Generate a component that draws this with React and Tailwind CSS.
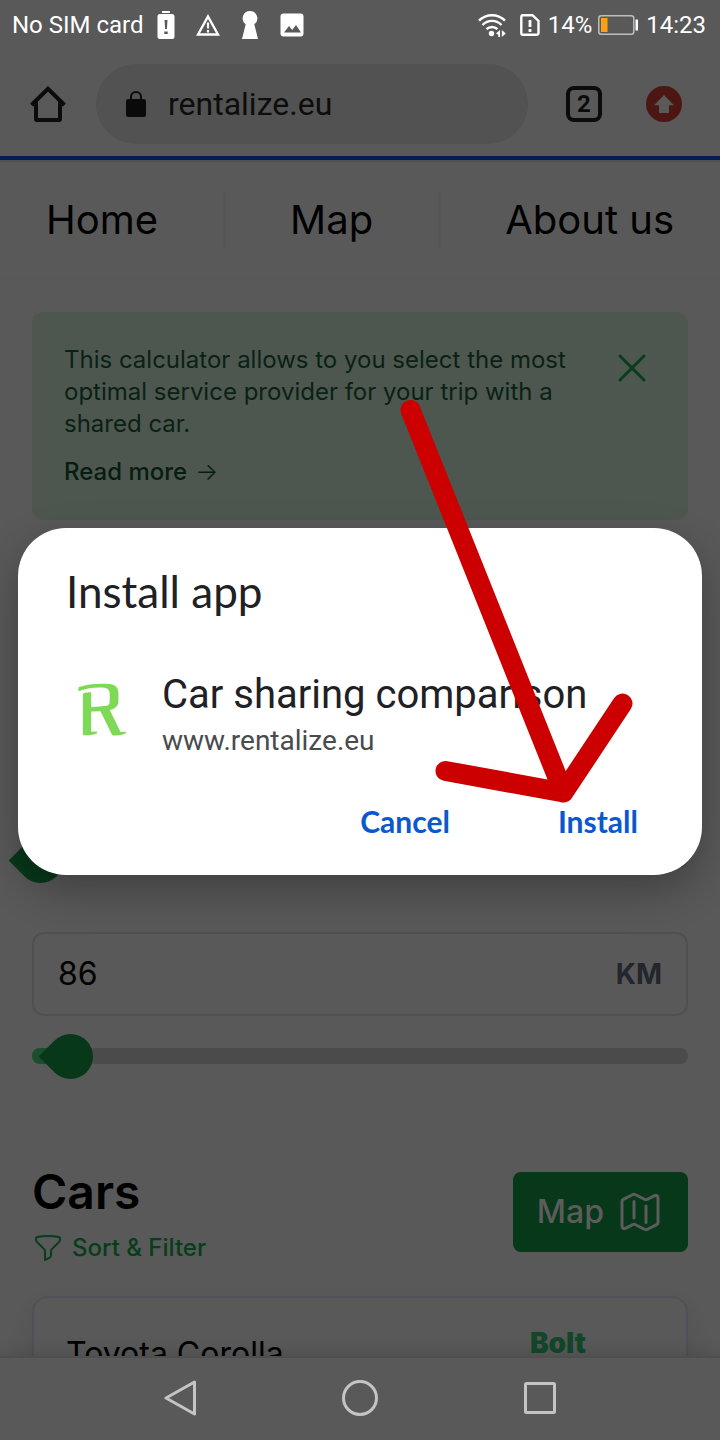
import { useState } from "react";
import { HiOutlineFunnel, HiOutlineMap, HiOutlineXMark } from "react-icons/hi2";

function StatusBar() {
  return (
    <div className="flex h-12 shrink-0 items-center justify-between pt-0.5 pr-3.5 pl-3 text-[24px] leading-8 text-white">
      <div className="flex items-center">
        <span>No SIM card</span>
        <svg className="ml-3 h-7 w-5" viewBox="0 0 20 28" aria-hidden="true">
          <path fill="#fff" fillRule="evenodd" d="M6 0h8v2H6zM4 3h12a2.5 2.5 0 0 1 2.500 2.500v20A2.500 2.500 0 0 1 16 28H4a2.500 2.500 0 0 1-2.500-2.500v-20A2.500 2.500 0 0 1 4 3zm4.500 6 .6 9h1.800l.6-9zM8.300 20.500v2.600h3.400v-2.600z" />
        </svg>
        <svg className="ml-5 h-6 w-6" viewBox="0 0 24 24" aria-hidden="true">
          <path d="M12 3.500 22 21.500H2z" fill="none" stroke="#fff" strokeWidth="2.400" />
          <path d="M12 9.500v6M12 17v2.600" stroke="#fff" strokeWidth="2.200" />
        </svg>
        <svg className="ml-5 h-7 w-5" viewBox="0 0 20 28" aria-hidden="true">
          <path fill="#fff" d="M10 0a7.300 7.300 0 0 1 4.300 13.200L18 28H2l3.700-14.800A7.300 7.300 0 0 1 10 0z" />
        </svg>
        <svg className="ml-5 h-6 w-6" viewBox="0 0 24 24" aria-hidden="true">
          <rect x=".5" y=".5" width="23" height="23" rx="3" fill="#fff" />
          <path fill="#595959" d="m4 19.500 5-6.500 3.200 4 3.800-5 5 7.500z" />
        </svg>
      </div>
      <div className="flex items-center">
        <svg className="h-6 w-7" viewBox="0 0 28 24" aria-hidden="true">
          <g fill="none" stroke="#fff" strokeWidth="2.400">
            <path d="M1 7.500C8.500.5 19.500.5 27 7.500" />
            <path d="M4.500 12C10 6.500 18 6.500 23.500 12" />
            <path d="M8.500 16.200c3-3 8-3 11 0" />
          </g>
          <circle cx="13.500" cy="20.500" r="2.700" fill="#fff" />
          <path fill="#fff" d="M22 17v7h-1.700v-2.200L18 20.500zM23.800 17l4 3.500-4 3.500z" />
        </svg>
        <svg className="ml-3.5 h-6 w-5" viewBox="0 0 20 24" aria-hidden="true">
          <path d="M3 2.200h9.500L18.500 8v12a1.800 1.800 0 0 1-1.800 1.800H3A1.800 1.800 0 0 1 1.300 20V4A1.800 1.800 0 0 1 3 2.200z" fill="none" stroke="#fff" strokeWidth="2.400" />
          <path d="M10 7v7M10 16v3" stroke="#fff" strokeWidth="2.800" />
        </svg>
        <span className="ml-2">14%</span>
        <svg className="ml-1.5 h-5 w-10" viewBox="0 0 40 20" aria-hidden="true">
          <rect x=".8" y=".8" width="35" height="18.400" rx="2.500" fill="none" stroke="#bdbdbd" strokeWidth="1.500" />
          <rect x="3" y="3" width="6.500" height="14" fill="#ff9f1a" />
          <rect x="37.500" y="4.500" width="2.500" height="11" fill="#fff" />
        </svg>
        <span className="ml-2">14:23</span>
      </div>
    </div>
  );
}

function Toolbar() {
  return (
    <header className="h-[114px] shrink-0 border-b-2 border-[#505050]">
      <div className="flex h-[112px] items-center border-b-4 border-[#001f4f] pt-1 pr-4">
        <button type="button" aria-label="Home" className="flex h-12 w-24 items-center justify-center">
          <svg className="h-9 w-9" viewBox="0 0 36 36" fill="none" stroke="#0b0b0b" strokeWidth="4" aria-hidden="true">
            <path d="M1.500 19 18 2.800 34.500 19" />
            <path d="M6 16v17a1 1 0 0 0 1 1h22a1 1 0 0 0 1-1V16" />
          </svg>
        </button>
        <div className="flex h-20 min-w-0 flex-1 items-center rounded-full bg-[#525252] pl-7">
          <svg className="h-7 w-6 shrink-0" viewBox="0 0 24 28" aria-hidden="true">
            <rect x="2" y="9" width="20" height="18" rx="2.500" fill="#0a0a0a" />
            <path d="M7 10V7a5 5 0 0 1 10 0v3" fill="none" stroke="#0a0a0a" strokeWidth="2" />
          </svg>
          <input
            aria-label="Address"
            defaultValue="rentalize.eu"
            className="ml-5 w-full min-w-0 bg-transparent text-[32px] leading-10 text-[#0d0d0d] outline-none"
          />
        </div>
        <button type="button" className="ml-4 flex h-12 w-20 items-center justify-center">
          <span className="flex h-9 w-9 items-center justify-center rounded-lg border-4 border-[#0b0b0b] text-[24px] leading-6 font-bold text-[#0b0b0b]">
            2
          </span>
        </button>
        <button type="button" aria-label="Update" className="flex h-12 w-20 items-center justify-center">
          <svg className="h-9 w-9" viewBox="0 0 36 36" aria-hidden="true">
            <circle cx="18" cy="18" r="18" fill="#4c1713" />
            <path d="m18 9 10 10.200h-5V27H13v-7.800H8z" fill="#595959" />
          </svg>
        </button>
      </div>
    </header>
  );
}

function SiteNav() {
  return (
    <nav className="flex h-[118px] items-center justify-between border-b-2 border-[#575757] px-[46px] text-[40px] leading-[56px] text-black">
      <a href="#home">Home</a>
      <span className="h-14 w-[3px] bg-[#565656]" />
      <a href="#map">Map</a>
      <span className="h-14 w-[3px] bg-[#565656]" />
      <a href="#about">About us</a>
    </nav>
  );
}

function Banner() {
  return (
    <section className="mt-8 flex items-start justify-between rounded-xl bg-[#4d574f] p-8 text-[24px] leading-8 text-[#0a2115]">
      <div className="max-w-[520px]">
        <p>
          This calculator allows to you select the most optimal service provider for your trip with a shared car.
        </p>
        <a href="#more" className="mt-4 flex gap-2 font-medium text-[#061d10]">
          <span>Read more</span>
          <span className="font-light" aria-hidden="true">→</span>
        </a>
      </div>
      <button type="button" aria-label="Close" className="shrink-0 text-[#0a3d1c]">
        <HiOutlineXMark className="h-12 w-12" />
      </button>
    </section>
  );
}

function Slider({ label, value, max, onChange }) {
  return (
    <div className="grid h-4 items-center">
      <div className="h-4 overflow-hidden rounded-full bg-[#4a4c4a] [grid-area:1/1]">
        <div className="h-4 bg-[#1a4f2c]" style={{ width: `${(value / max) * 100}%` }} />
      </div>
      <input
        type="range"
        aria-label={label}
        min="0"
        max={max}
        value={value}
        onChange={(e) => onChange(Number(e.target.value))}
        className="-mx-[14px] h-4 appearance-none bg-transparent [grid-area:1/1] [&::-webkit-slider-thumb]:h-[45px] [&::-webkit-slider-thumb]:w-[45px] [&::-webkit-slider-thumb]:rotate-45 [&::-webkit-slider-thumb]:appearance-none [&::-webkit-slider-thumb]:rounded-full [&::-webkit-slider-thumb]:rounded-bl-[6px] [&::-webkit-slider-thumb]:bg-[#08381a]"
      />
    </div>
  );
}

function Cars() {
  return (
    <section className="mt-24">
      <div className="flex items-center justify-between">
        <div>
          <h2 className="text-[48px] leading-[64px] font-semibold text-black">Cars</h2>
          <button type="button" className="mt-2 flex items-center gap-2 text-[24px] leading-8 font-medium text-[#083d1b]">
            <HiOutlineFunnel className="h-8 w-8" />
            Sort &amp; Filter
          </button>
        </div>
        <button type="button" className="flex h-20 items-center gap-3 rounded-lg bg-[#08381a] px-6 text-[32px] leading-10 font-medium text-[#5c5c5c]">
          Map
          <HiOutlineMap className="h-12 w-12" />
        </button>
      </div>
      <article className="mt-8 flex h-60 items-start justify-between rounded-2xl border-2 border-[#505056] pt-[22px] pr-[100px] pl-8 shadow-[0_12px_24px_rgba(0,0,0,0.08)]">
        <h3 className="pt-3.5 text-[32px] leading-10 text-black">Toyota Corolla</h3>
        <span className="text-[28px] leading-[46px] font-black text-[#12472a]">Bolt</span>
      </article>
    </section>
  );
}

function InstallDialog() {
  return (
    <div className="pointer-events-none absolute inset-x-0 top-12 bottom-[86px] flex items-center">
      <div
        role="dialog"
        aria-labelledby="install-title"
        className="pointer-events-auto relative mx-[18px] w-full rounded-[48px] bg-white px-12 pt-[37px] pb-[30px] text-[#202124] shadow-[0_16px_40px_rgba(0,0,0,0.28)]"
      >
        <h1 id="install-title" className="font-['Lato',sans-serif] text-[44px] leading-[52px]">
          Install app
        </h1>
        <div className="mt-[52px] flex items-start gap-6">
          <svg className="mt-1.5 h-[72px] w-[72px] shrink-0" viewBox="0 0 72 72" aria-hidden="true">
            <g fill="#7ed957">
              <path fillRule="evenodd" d="M12.500 12.200C20 9.500 31 8.400 43 9c6 .4 9.400 3.500 9.400 8.500v8.500c0 5-3.500 8-8.600 9L54.500 57l5-.2c.8 0 .7 1.400-.2 1.800-2.800 1.600-8 2.300-13 1.700L34.500 36.200l-9.300.4v20.200l5.500-.2c.8 0 .6 1.500-.2 1.900-3.500 1.600-9 2.200-13.600 1.500V19.500c0-1.500 3-2.300 8.300-2.300v15l15.500-1.500c2-.3 3-2 3-4.500v-7.500c0-4-2.500-5.800-7-6.200-8.500-.5-17 .7-24.200 3.700z" />
            </g>
          </svg>
          <div className="min-w-0">
            <p className="text-[40px] leading-[52px] whitespace-nowrap">Car sharing comparison</p>
            <p className="text-[28px] leading-10 text-[#4a4b4d]">www.rentalize.eu</p>
          </div>
        </div>
        <div className="mt-9 flex justify-end gap-[76px] font-['Lato',sans-serif] text-[30px] leading-[48px] font-bold text-[#0b57d0]">
          <button type="button" className="px-4">Cancel</button>
          <button type="button" className="px-4">Install</button>
        </div>
        <svg
          className="pointer-events-none absolute right-[62px] bottom-[65px] h-[410px] w-[240px]"
          viewBox="400 400 240 410"
          fill="none"
          stroke="#cc0000"
          strokeWidth="20"
          strokeLinecap="round"
          aria-hidden="true"
        >
          <path d="M410.500 410 563.500 792.500M622.500 703.500 563.500 792.500M445.500 771 563.500 792.500" />
        </svg>
      </div>
    </div>
  );
}

function SystemNav() {
  return (
    <footer className="relative grid h-[84px] shrink-0 grid-cols-3 border-t-2 border-[#4f4f4f] bg-[#595959] px-[12.5%] pb-0.5 shadow-[0_-2px_16px_rgba(0,0,0,0.14)]">
      <button type="button" aria-label="Back" className="flex items-center justify-center">
        <svg className="h-9 w-9" viewBox="0 0 36 36" fill="none" stroke="#c4c4c4" strokeWidth="3" strokeLinejoin="round" aria-hidden="true">
          <path d="M32.500 2v32L4 18z" />
        </svg>
      </button>
      <button type="button" aria-label="Home screen" className="flex items-center justify-center">
        <svg className="h-9 w-9" viewBox="0 0 36 36" fill="none" stroke="#c4c4c4" strokeWidth="3" aria-hidden="true">
          <circle cx="18" cy="18" r="16.500" />
        </svg>
      </button>
      <button type="button" aria-label="Recent apps" className="flex items-center justify-center">
        <svg className="h-9 w-9" viewBox="0 0 36 36" fill="none" stroke="#c4c4c4" strokeWidth="3" strokeLinejoin="round" aria-hidden="true">
          <rect x="3.500" y="3.500" width="29" height="29" rx="1" />
        </svg>
      </button>
    </footer>
  );
}

export default function App() {
  const [hours, setHours] = useState(0);
  const [distance, setDistance] = useState(86);

  return (
    <div className="relative flex h-screen flex-col overflow-hidden bg-[#595959] font-['Roboto',sans-serif]">
      <StatusBar />
      <Toolbar />
      <main className="min-h-0 flex-1 overflow-hidden font-['Inter',sans-serif]">
        <SiteNav />
        <div className="px-8">
          <Banner />
          <div className="mt-[332px]">
            <Slider label="Duration" value={hours} max={100} onChange={setHours} />
          </div>
          <label className="mt-16 flex h-[84px] items-center rounded-xl border-2 border-[#505050] px-6">
            <input
              value={distance}
              onChange={(e) => setDistance(Number(e.target.value) || 0)}
              className="w-full min-w-0 flex-1 bg-transparent text-[32px] leading-10 text-black outline-none"
            />
            <span className="text-[28px] leading-10 font-bold text-[#23262d]">KM</span>
          </label>
          <div className="mt-8">
            <Slider label="Distance" value={distance} max={1850} onChange={setDistance} />
          </div>
          <Cars />
        </div>
      </main>
      <SystemNav />
      <InstallDialog />
    </div>
  );
}
